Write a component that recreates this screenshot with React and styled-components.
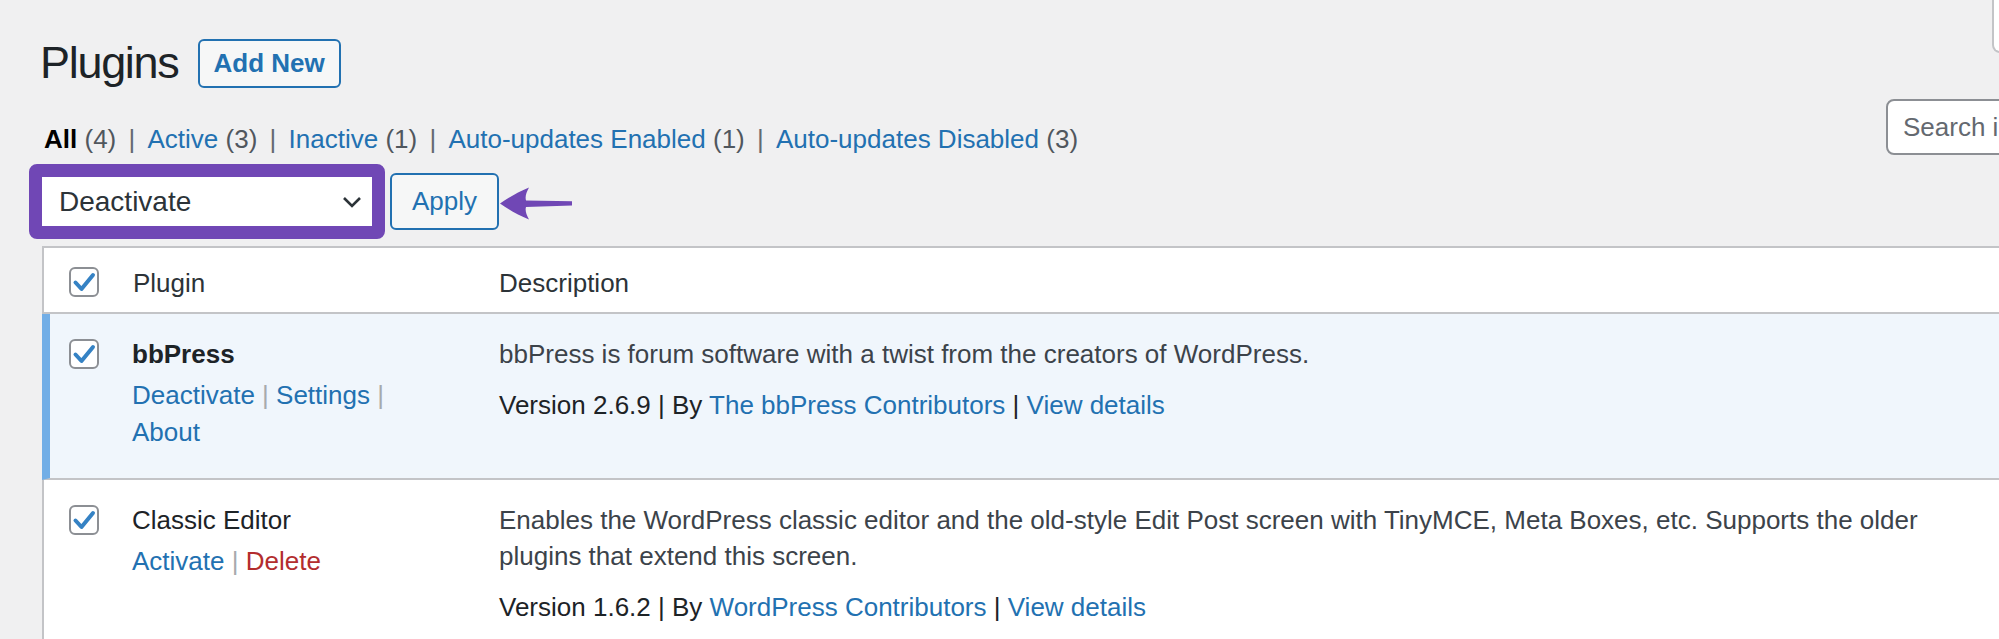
import React from 'react';
import styled, { createGlobalStyle } from 'styled-components';

const BLUE = '#2271b1';
const PURPLE = '#7047b5';
const BORDER = '#c3c4c7';
const INPUT_BORDER = '#8c8f94';
const PAGE_BG = '#f0f0f1';
const TEXT = '#1d2327';
const HEAD_TEXT = '#2c3338';
const SOFT_TEXT = '#3c434a';
const COUNT = '#50575e';
const MUTED = '#646970';
const SEP = '#a7aaad';
const RED = '#b32d2e';
const ACTIVE_BG = '#f0f6fc';
const ACTIVE_BAR = '#72aee6';
const BUTTON_BG = '#f6f7f7';

const plugins = [
  {
    name: 'bbPress',
    active: true,
    actions: [
      { label: 'Deactivate' },
      { label: 'Settings' },
      { label: 'About' },
    ],
    description: 'bbPress is forum software with a twist from the creators of WordPress.',
    version: '2.6.9',
    author: 'The bbPress Contributors',
  },
  {
    name: 'Classic Editor',
    active: false,
    actions: [
      { label: 'Activate' },
      { label: 'Delete', danger: true },
    ],
    description:
      'Enables the WordPress classic editor and the old-style Edit Post screen with TinyMCE, Meta Boxes, etc. Supports the older plugins that extend this screen.',
    version: '1.6.2',
    author: 'WordPress Contributors',
  },
];

const filters = [
  { label: 'All', count: 4, current: true },
  { label: 'Active', count: 3 },
  { label: 'Inactive', count: 1 },
  { label: 'Auto-updates Enabled', count: 1 },
  { label: 'Auto-updates Disabled', count: 3 },
];

const GlobalStyle = createGlobalStyle`
  html, body {
    margin: 0;
    padding: 0;
    background: ${PAGE_BG};
    overflow: hidden;
  }
  body {
    font-family: "Liberation Sans", Arial, sans-serif;
    font-size: 26px;
    line-height: 1.4;
    color: ${TEXT};
  }
  * { box-sizing: border-box; }
`;

const Page = styled.div`
  width: 2060px;
  min-height: 639px;
  padding: 0 20px 0 42px;
`;

const Header = styled.div`
  display: flex;
  justify-content: space-between;
  align-items: flex-start;
`;

const TitleGroup = styled.div`
  display: flex;
  align-items: center;
  gap: 19px;
  margin-top: 33px;
`;

const Title = styled.h1`
  margin: 0 0 0 -2px;
  font-size: 45px;
  font-weight: 400;
  line-height: 60px;
  letter-spacing: -1.3px;
  color: ${TEXT};
`;

const AddNew = styled.a`
  display: inline-block;
  padding: 8px 14px;
  border: 2px solid ${BLUE};
  border-radius: 6px;
  background: ${BUTTON_BG};
  color: ${BLUE};
  font-weight: 700;
  line-height: 29px;
  text-decoration: none;
`;

const ScreenTab = styled.div`
  width: 48px;
  height: 53px;
  background: #fff;
  border: 2px solid ${BORDER};
  border-top: none;
  border-radius: 0 0 0 8px;
`;

const FilterRow = styled.div`
  display: flex;
  justify-content: space-between;
  align-items: flex-start;
  margin-top: 6px;
`;

const Links = styled.div`
  margin: 22px 0 0 -3px;
  line-height: 36px;
  color: ${MUTED};
  white-space: nowrap;
`;

const FilterLink = styled.a`
  padding: 0 5px;
  color: ${p => (p.current ? '#000' : BLUE)};
  font-weight: ${p => (p.current ? 700 : 400)};
  text-decoration: none;
`;

const Count = styled.span`
  color: ${COUNT};
  font-weight: 400;
`;

const SearchInput = styled.input`
  width: 154px;
  height: 56px;
  padding: 0 15px;
  border: 2px solid ${INPUT_BORDER};
  border-radius: 8px;
  background: #fff;
  font: inherit;
  font-size: 26px;
  color: ${HEAD_TEXT};
  outline: none;

  &::placeholder {
    color: ${MUTED};
  }
`;

const TableNav = styled.div`
  display: flex;
  align-items: center;
  margin-top: 7px;
`;

const Highlight = styled.div`
  display: flex;
  margin-left: -13px;
  border: 13px solid ${PURPLE};
  border-radius: 8px;
`;

const BulkSelect = styled.div`
  display: flex;
  align-items: center;
  justify-content: space-between;
  width: 330px;
  height: 49px;
  padding: 0 10px 0 17px;
  background: #fff;
  color: ${HEAD_TEXT};
  font-size: 28px;
  line-height: 30px;
`;

const ApplyButton = styled.button`
  margin-left: 5px;
  padding: 12px 20px;
  border: 2px solid ${BLUE};
  border-radius: 6px;
  background: ${BUTTON_BG};
  color: ${BLUE};
  font: inherit;
  font-size: 26px;
  line-height: 29px;
`;

const Arrow = styled.svg`
  display: block;
  flex: none;
  width: 74px;
  height: 33px;
  margin-top: 4px;
`;

const Table = styled.div`
  margin-top: 7px;
  border-top: 2px solid ${BORDER};
  border-right: 2px solid ${BORDER};
  background: #fff;
`;

const Row = styled.div`
  display: grid;
  grid-template-columns: ${p => (p.active ? 64 : 70)}px 366px 1fr;
  border-left: ${p => (p.active ? `8px solid ${ACTIVE_BAR}` : `2px solid ${BORDER}`)};
  border-bottom: 2px solid ${BORDER};
  background: ${p => (p.active ? ACTIVE_BG : '#fff')};
`;

const HeadRow = styled(Row)`
  min-height: 66px;
`;

const CheckCell = styled.div`
  display: flex;
  justify-content: flex-end;
  align-items: flex-start;
  padding: ${p => (p.head ? '19px' : '25px')} 15px 0 0;
`;

const HeadCell = styled.div`
  padding: 17px 20px 0 ${p => p.pad}px;
  line-height: 36px;
  color: ${HEAD_TEXT};
`;

const Cell = styled.div`
  padding: 22px ${p => p.right}px 27px ${p => p.pad}px;
  line-height: 36px;
`;

const Box = styled.span`
  display: flex;
  align-items: center;
  justify-content: center;
  width: 30px;
  height: 30px;
  border: 2px solid ${INPUT_BORDER};
  border-radius: 6px;
  background: #fff;
`;

const PluginName = styled.div`
  font-weight: ${p => (p.active ? 700 : 400)};
  color: ${TEXT};
`;

const RowActions = styled.div`
  margin-top: 5px;
  line-height: 37px;
  color: ${SEP};
`;

const ActionItem = styled.span`
  white-space: nowrap;
`;

const ActionLink = styled.a`
  color: ${p => (p.danger ? RED : BLUE)};
  text-decoration: none;
`;

const Desc = styled.p`
  max-width: 1480px;
  margin: 0 0 15px;
  color: ${SOFT_TEXT};
`;

const VersionLine = styled.div`
  color: ${TEXT};
`;

const InlineLink = styled.a`
  color: ${BLUE};
  text-decoration: none;
`;

const Checkbox = () => (
  <Box>
    <svg width="24" height="24" viewBox="0 0 24 24">
      <path
        d="M3.5 12.5 L9.5 19 L21 5"
        fill="none"
        stroke="#3582c4"
        strokeWidth="4"
        strokeLinecap="round"
        strokeLinejoin="round"
      />
    </svg>
  </Box>
);

const Chevron = () => (
  <svg width="20" height="12" viewBox="0 0 20 12">
    <path d="M2 2 L10 10 L18 2" fill="none" stroke="#2c3338" strokeWidth="2.6" />
  </svg>
);

const PointerArrow = () => (
  <Arrow viewBox="0 0 74 33">
    <path
      d="M1 16.5 C9 11 19 5 30 0.5 C27 6 26 10 27 13.5 L73 14.2 L73 18.4 L27 20 C26 23 27 27 30 32.5 C19 28 9 22 1 16.5 Z"
      fill={PURPLE}
    />
  </Arrow>
);

const PluginRow = ({ plugin }) => (
  <Row active={plugin.active}>
    <CheckCell>
      <Checkbox />
    </CheckCell>
    <Cell pad={18} right={40}>
      <PluginName active={plugin.active}>{plugin.name}</PluginName>
      <RowActions>
        {plugin.actions.map((a, i) => (
          <React.Fragment key={a.label}>
            <ActionItem>
              <ActionLink danger={a.danger}>{a.label}</ActionLink>
              {i < plugin.actions.length - 1 ? ' | ' : ''}
            </ActionItem>
            {i < plugin.actions.length - 1 ? ' ' : ''}
          </React.Fragment>
        ))}
      </RowActions>
    </Cell>
    <Cell pad={19} right={20}>
      <Desc>{plugin.description}</Desc>
      <VersionLine>
        Version {plugin.version} | By <InlineLink>{plugin.author}</InlineLink> |{' '}
        <InlineLink>View details</InlineLink>
      </VersionLine>
    </Cell>
  </Row>
);

export default function App() {
  return (
    <Page>
      <GlobalStyle />
      <Header>
        <TitleGroup>
          <Title>Plugins</Title>
          <AddNew>Add New</AddNew>
        </TitleGroup>
        <ScreenTab />
      </Header>

      <FilterRow>
        <Links>
          {filters.map((f, i) => (
            <React.Fragment key={f.label}>
              <FilterLink current={f.current}>
                {f.label} <Count>({f.count})</Count>
              </FilterLink>
              {i < filters.length - 1 ? ' | ' : ''}
            </React.Fragment>
          ))}
        </Links>
        <SearchInput placeholder="Search installed plugins..." />
      </FilterRow>

      <TableNav>
        <Highlight>
          <BulkSelect>
            <span>Deactivate</span>
            <Chevron />
          </BulkSelect>
        </Highlight>
        <ApplyButton>Apply</ApplyButton>
        <PointerArrow />
      </TableNav>

      <Table>
        <HeadRow>
          <CheckCell head>
            <Checkbox />
          </CheckCell>
          <HeadCell pad={19}>Plugin</HeadCell>
          <HeadCell pad={19}>Description</HeadCell>
        </HeadRow>
        {plugins.map(p => (
          <PluginRow key={p.name} plugin={p} />
        ))}
      </Table>
    </Page>
  );
}
